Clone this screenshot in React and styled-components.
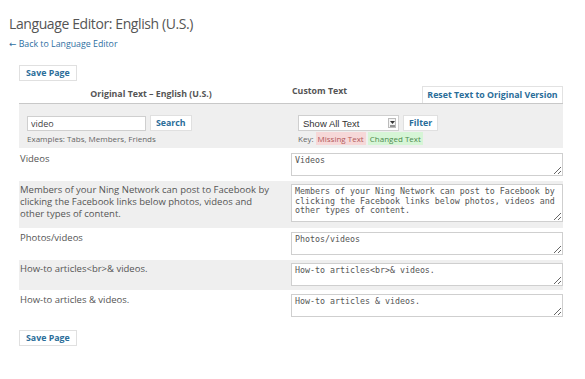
import React from 'react'
import styled, { createGlobalStyle } from 'styled-components'

const GlobalStyle = createGlobalStyle`
  body {
    margin: 0;
    background: #fff;
    font-family: 'Open Sans', 'DejaVu Sans', sans-serif;
    color: #555;
  }
`

const rows = [
  { label: 'Videos', value: 'Videos', shade: false, tall: false },
  {
    label: 'Members of your Ning Network can post to Facebook by clicking the Facebook links below photos, videos and other types of content.',
    value: 'Members of your Ning Network can post to Facebook by clicking the Facebook links below photos, videos and other types of content.',
    shade: true,
    tall: true,
  },
  { label: 'Photos/videos', value: 'Photos/videos', shade: false, tall: false },
  { label: 'How-to articles<br>& videos.', value: 'How-to articles<br>& videos.', shade: true, tall: false },
  { label: 'How-to articles & videos.', value: 'How-to articles & videos.', shade: false, tall: false },
]

function App() {
  return (
    <Page>
      <GlobalStyle />
      <Title>Language Editor: English (U.S.)</Title>
      <BackLink href="#">← Back to Language Editor</BackLink>
      <Content>
        <Button>Save Page</Button>
        <Table>
          <HeadRow>
            <HeadLeft>Original Text – English (U.S.)</HeadLeft>
            <HeadRight>
              <span>Custom Text</span>
              <ResetButton>Reset Text to Original Version</ResetButton>
            </HeadRight>
          </HeadRow>
          <FilterRow>
            <Cell>
              <Controls>
                <TextInput defaultValue="video" />
                <SmallButton>Search</SmallButton>
              </Controls>
              <Hint>Examples: Tabs, Members, Friends</Hint>
            </Cell>
            <Cell>
              <Controls>
                <Select>
                  <span>Show All Text</span>
                  <Arrow>
                    <svg width="5" height="7" viewBox="0 0 5 7">
                      <path d="M0 1h5L2.5 4z" fill="#333" />
                      <path d="M0 6h5" stroke="#333" strokeWidth="1" />
                    </svg>
                  </Arrow>
                </Select>
                <SmallButton>Filter</SmallButton>
              </Controls>
              <Hint>
                Key: <Tag tone="missing">Missing Text</Tag> <Tag tone="changed">Changed Text</Tag>
              </Hint>
            </Cell>
          </FilterRow>
          {rows.map((r, i) => (
            <Row key={i} shade={r.shade}>
              <Label>{r.label}</Label>
              <Cell right>
                <Area tall={r.tall} defaultValue={r.value} />
              </Cell>
            </Row>
          ))}
        </Table>
        <Button>Save Page</Button>
      </Content>
    </Page>
  )
}

export default App

const Page = styled.div`
  padding: 14px 0 0 9px;
  width: 576px;
`

const Title = styled.h1`
  margin: 0;
  font-size: 14px;
  font-weight: normal;
  color: #555;
  line-height: 20px;
  letter-spacing: -0.4px;
`

const BackLink = styled.a`
  display: block;
  margin-top: 3px;
  font-size: 8.8px;
  line-height: 14px;
  color: #2f6f9f;
  text-decoration: none;
`

const Content = styled.div`
  margin: 8px 0 0 10px;
  width: 544px;
`

const Button = styled.div`
  display: inline-block;
  box-sizing: border-box;
  height: 16px;
  padding: 0 6px;
  border: 1px solid #e0e0e0;
  background: #fff;
  color: #2a6d99;
  font-size: 8.8px;
  font-weight: bold;
  line-height: 14px;
`

const Table = styled.div`
  margin: 2px 0 3px;
`

const HeadRow = styled.div`
  display: grid;
  grid-template-columns: 264px 280px;
  border-bottom: 1px solid #c8c8c8;
  height: 20px;
`

const HeadLeft = styled.div`
  text-align: center;
  font-size: 8.8px;
  font-weight: bold;
  color: #555;
  line-height: 14px;
  padding-top: 4px;
`

const HeadRight = styled.div`
  display: flex;
  justify-content: space-between;
  align-items: flex-end;
  padding-left: 9px;
  font-size: 8.8px;
  font-weight: bold;
  color: #555;

  span {
    align-self: flex-start;
    line-height: 14px;
    padding-top: 1px;
  }
`

const ResetButton = styled.div`
  box-sizing: border-box;
  width: 141px;
  height: 17px;
  border: 1px solid #e2e2e2;
  border-bottom: none;
  background: #fff;
  color: #2a6d99;
  text-align: center;
  white-space: nowrap;
  line-height: 16px;
  font-size: 8.8px;
  font-weight: bold;
`

const Row = styled.div`
  display: grid;
  grid-template-columns: 264px 280px;
  background: ${(p) => (p.shade ? '#efefef' : '#fff')};
  border-top: 1px solid #fff;
`

const FilterRow = styled(Row)`
  background: #efefef;
  height: 45px;
  box-sizing: border-box;
  border-top: none;
  border-bottom: 1px solid #fff;

  > div {
    padding-top: 11px;
    padding-left: 8px;
  }
  > div:last-child {
    padding-left: 15px;
  }
`

const Cell = styled.div`
  padding: ${(p) => (p.right ? '3px 0 4px 8px' : '0 0 0 8px')};
`

const Controls = styled.div`
  display: flex;
  align-items: center;
  gap: 4px;
`

const TextInput = styled.input`
  box-sizing: border-box;
  width: 119px;
  height: 15px;
  border: 1px solid #cfcfcf;
  padding: 0 3px;
  font-family: 'Open Sans', 'DejaVu Sans', sans-serif;
  font-size: 9px;
  color: #444;
  outline: none;
`

const SmallButton = styled.div`
  box-sizing: border-box;
  height: 16px;
  padding: 0 5px;
  border: 1px solid #e0e0e0;
  background: #fff;
  color: #2a6d99;
  font-size: 8.8px;
  font-weight: bold;
  line-height: 14px;
`

const Select = styled.div`
  box-sizing: border-box;
  width: 101px;
  height: 16px;
  border: 1px solid #cfcfcf;
  background: #fff;
  display: flex;
  align-items: center;
  justify-content: space-between;
  padding: 0 2px 0 4px;
  font-family: 'Liberation Sans', Arial, sans-serif;
  font-size: 9.5px;
  color: #333;
`

const Arrow = styled.div`
  width: 8px;
  height: 10px;
  border: 1px solid #bbb;
  box-sizing: border-box;
  display: flex;
  align-items: center;
  justify-content: center;
  background: #f4f4f4;
`

const Hint = styled.div`
  margin-top: 2px;
  font-size: 8px;
  line-height: 11px;
  color: #666;
`

const Tag = styled.span`
  padding: 1px 2px;
  background: ${(p) => (p.tone === 'missing' ? '#f6d8d8' : '#d6f5d6')};
  color: ${(p) => (p.tone === 'missing' ? '#b25a5a' : '#4c8a4c')};
`

const Label = styled.div`
  padding: 3px 6px 8px 1px;
  font-size: 9.5px;
  line-height: 12px;
  color: #555;
`

const Area = styled.textarea`
  display: block;
  box-sizing: border-box;
  width: 272px;
  height: ${(p) => (p.tall ? 38 : 23)}px;
  border: 1px solid #cfcfcf;
  padding: 2px 3px;
  margin: 0;
  resize: vertical;
  overflow: hidden;
  font-family: 'DejaVu Sans Mono', 'Liberation Mono', monospace;
  font-size: 8.3px;
  line-height: 9.6px;
  color: #555;
  background: #fff;
`
